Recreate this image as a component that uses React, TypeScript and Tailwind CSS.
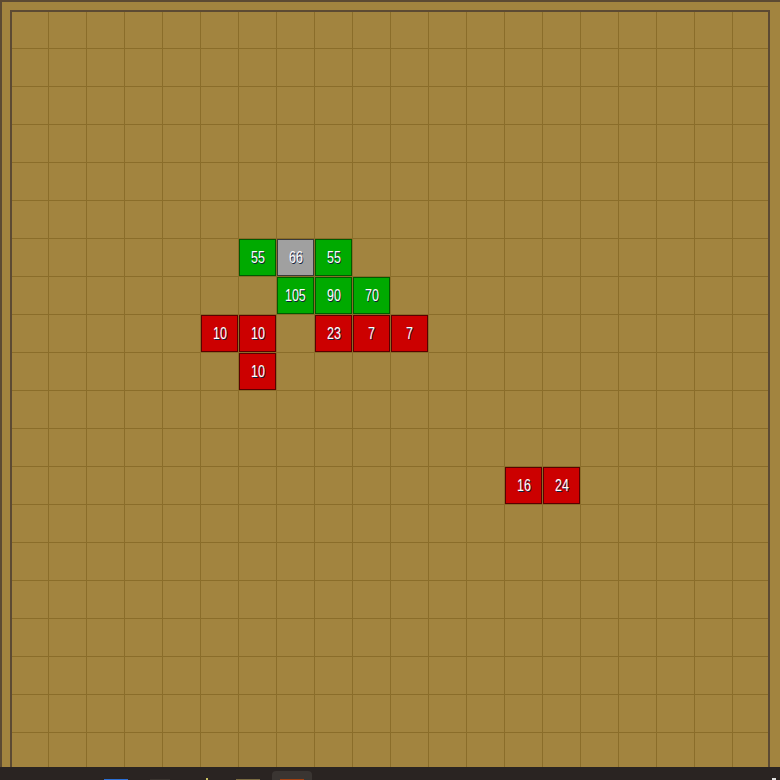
import React from 'react';

type Tile = { v: number; kind: 'green' | 'gray' | 'red' };

// row,col -> tile
const tiles: Record<string, Tile> = {
    '6,6': { v: 55, kind: 'green' },
    '6,7': { v: 66, kind: 'gray' },
    '6,8': { v: 55, kind: 'green' },
    '7,7': { v: 105, kind: 'green' },
    '7,8': { v: 90, kind: 'green' },
    '7,9': { v: 70, kind: 'green' },
    '8,5': { v: 10, kind: 'red' },
    '8,6': { v: 10, kind: 'red' },
    '8,8': { v: 23, kind: 'red' },
    '8,9': { v: 7, kind: 'red' },
    '8,10': { v: 7, kind: 'red' },
    '9,6': { v: 10, kind: 'red' },
    '12,13': { v: 16, kind: 'red' },
    '12,14': { v: 24, kind: 'red' },
};

const tileClass = {
    green: 'bg-[#00aa00] border-[#005a00]',
    gray: 'bg-[#a0a0a0] border-[#3a3a3a]',
    red: 'bg-[#cc0000] border-[#5a0000]',
};

function Cell({ r, c }: { r: number; c: number }) {
    const t = tiles[`${r},${c}`];
    return (
        <div className="w-[38px] h-[38px] border-l border-t border-[#8a6d2a]">
            {t && (
                <div className={`w-full h-full border flex items-center justify-center ${tileClass[t.kind]}`}>
                    <span className="inline-block scale-x-[0.78] text-white text-[16px] leading-none [text-shadow:1px_1px_0_#102040]">
                        {t.v}
                    </span>
                </div>
            )}
        </div>
    );
}

export default function App() {
    const cells = [];
    for (let r = 0; r < 20; r++) {
        for (let c = 0; c < 20; c++) {
            cells.push(<Cell key={`${r}-${c}`} r={r} c={c} />);
        }
    }

    return (
        <div className="w-[780px] h-[780px] overflow-hidden bg-[#a2843f] font-['Liberation_Sans',Arial,sans-serif]">
            <div className="border-l-2 border-t-2 border-[#5c4a33] pl-2 pt-2 h-full">
                <div className="relative w-[760px] h-[760px]">
                    <div className="grid grid-cols-[repeat(20,38px)]">{cells}</div>
                    <div className="absolute inset-0 border-2 border-[#5c4a33] pointer-events-none" />
                </div>
            </div>

            {/* taskbar edge peeking in at the bottom */}
            <div className="fixed left-0 bottom-0 w-[780px] h-[13px] bg-[#2a2422] flex items-end">
                <div className="w-[24px] h-[1px] bg-[#2a6fd6] ml-[104px]" />
                <div className="w-[20px] h-[1px] bg-[#3a3430] ml-[22px]" />
                <div className="w-[2px] h-[2px] bg-[#c8c060] ml-[36px]" />
                <div className="w-[24px] h-[1px] bg-[#7a6a40] ml-[28px]" />
                <div className="w-[40px] h-[9px] bg-[#3a3532] rounded-t-[4px] ml-[12px] flex items-end justify-center">
                    <div className="w-[24px] h-[1px] bg-[#a04010]" />
                </div>
                <div className="w-[4px] h-[2px] bg-[#e0e0e0] ml-auto mr-[4px]" />
            </div>
        </div>
    );
}
